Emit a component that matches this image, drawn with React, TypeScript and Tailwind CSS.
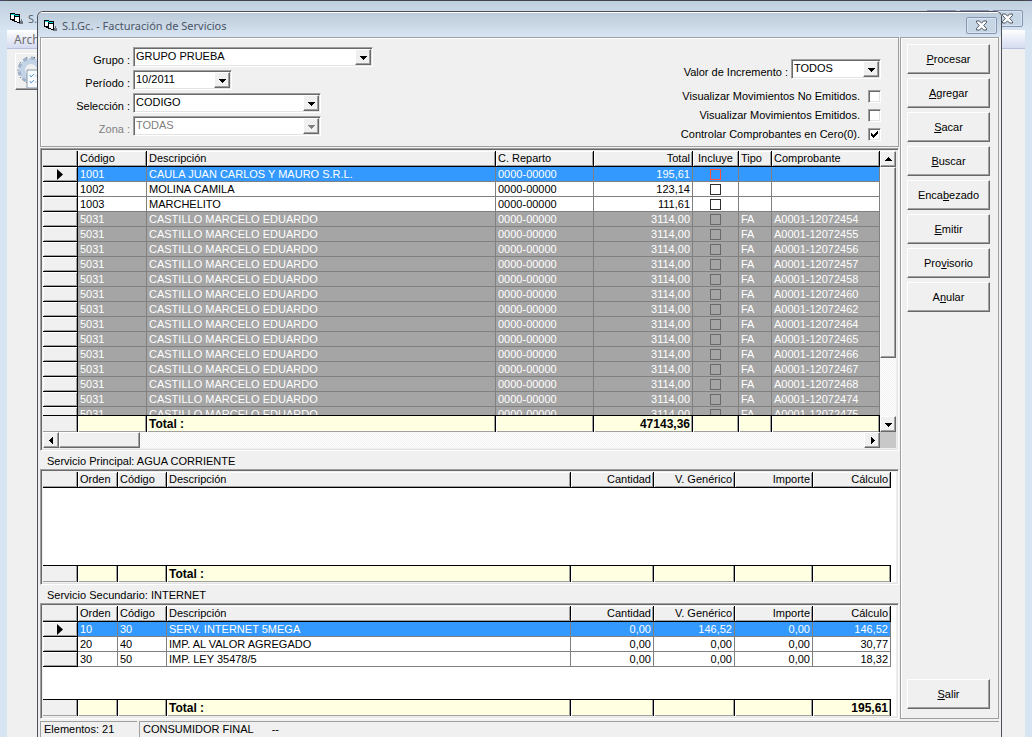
import type { ReactNode } from "react";

type Columna = {
    titulo: string;
    ancho?: string;
    derecha?: boolean;
    centro?: boolean;
};

type Fila = {
    celdas: string[];
    estado: "activa" | "normal" | "emitida";
};

const fuente = "font-['Liberation_Sans',Arial,sans-serif] text-[11px] leading-[13px]";

const columnasFacturas: Columna[] = [
    { titulo: "Código", ancho: "w-[69px]" },
    { titulo: "Descripción" },
    { titulo: "C. Reparto", ancho: "w-[98px]" },
    { titulo: "Total", ancho: "w-[99px]", derecha: true },
    { titulo: "Incluye", ancho: "w-[46px]", centro: true },
    { titulo: "Tipo", ancho: "w-[33px]" },
    { titulo: "Comprobante", ancho: "w-[108px]" },
];

const columnasServicio: Columna[] = [
    { titulo: "Orden", ancho: "w-[40px]" },
    { titulo: "Código", ancho: "w-[49px]" },
    { titulo: "Descripción" },
    { titulo: "Cantidad", ancho: "w-[83px]", derecha: true },
    { titulo: "V. Genérico", ancho: "w-[81px]", derecha: true },
    { titulo: "Importe", ancho: "w-[78px]", derecha: true },
    { titulo: "Cálculo", ancho: "w-[78px]", derecha: true },
];

const comprobantes = [
    "12072454", "12072455", "12072456", "12072457", "12072458", "12072460", "12072462",
    "12072464", "12072465", "12072466", "12072467", "12072468", "12072474", "12072475",
];

const facturas: Fila[] = [
    { celdas: ["1001", "CAULA JUAN CARLOS Y MAURO S.R.L.", "0000-00000", "195,61", "check", "", ""], estado: "activa" },
    { celdas: ["1002", "MOLINA CAMILA", "0000-00000", "123,14", "check", "", ""], estado: "normal" },
    { celdas: ["1003", "MARCHELITO", "0000-00000", "111,61", "check", "", ""], estado: "normal" },
    ...comprobantes.map((numero): Fila => ({
        celdas: ["5031", "CASTILLO MARCELO EDUARDO", "0000-00000", "3114,00", "check", "FA", `A0001-${numero}`],
        estado: "emitida",
    })),
];

const secundarios: Fila[] = [
    { celdas: ["10", "30", "SERV. INTERNET 5MEGA", "0,00", "146,52", "0,00", "146,52"], estado: "activa" },
    { celdas: ["20", "40", "IMP. AL VALOR AGREGADO", "0,00", "0,00", "0,00", "30,77"], estado: "normal" },
    { celdas: ["30", "50", "IMP. LEY 35478/5", "0,00", "0,00", "0,00", "18,32"], estado: "normal" },
];

const coloresFila = {
    activa: "bg-[#3399ff] text-white",
    normal: "bg-white text-black",
    emitida: "bg-[#a5a5a5] text-white",
};

const coloresCheck = {
    activa: "border-[#ff5040]",
    normal: "border-[#303030]",
    emitida: "border-[#696969]",
};

// [antes, tecla, despues]
const acciones = [
    ["", "P", "rocesar"],
    ["", "A", "gregar"],
    ["", "S", "acar"],
    ["", "B", "uscar"],
    ["Enca", "b", "ezado"],
    ["", "E", "mitir"],
    ["Pro", "v", "isorio"],
    ["A", "n", "ular"],
];

function IconoVB() {
    return (
        <svg width="14" height="13" viewBox="0 0 14 13" shapeRendering="crispEdges" aria-hidden="true">
            <path d="M8 9h3V7h1v2h1v3H9z" fill="#707a84" />
            <path d="M0 1h5v1h5v9H7v-1H4V9H2V8H0z" fill="#000" />
            <path d="M1 2h4v1h4v1H5V3H1z" fill="#00e0e0" />
            <path d="M1 3h3v4H1z" fill="#fff" />
            <path d="M5 5h4v5H7V9H5z" fill="#fff" />
        </svg>
    );
}

const botonTitulo = "flex h-[17px] w-[31px] items-center justify-center rounded-[2px] border border-[#8795b3] bg-[#c6d6e5] shadow-[inset_0_0_0_1px_#d8e4ef]";

function BotonCerrar() {
    return (
        <button aria-label="Cerrar" className={botonTitulo}>
            <svg width="13" height="11" viewBox="0 0 13 11" aria-hidden="true">
                <path d="M1.500 1h3l2 2.200L8.500 1h3v1.500L8.700 5.500l2.800 3V10h-3l-2-2.200L4.500 10h-3V8.500l2.800-3-2.800-3z" fill="#fff" stroke="#4d5664" strokeWidth="1" />
            </svg>
        </button>
    );
}

function Flecha({ direccion, color = "#000" }: { direccion: "arriba" | "abajo" | "izquierda" | "derecha"; color?: string }) {
    const formas = {
        arriba: "M4 2h1v1h1v1h1v1h1v1H1V5h1V4h1V3h1z",
        abajo: "M1 3h7v1H7v1H6v1H5v1H4V6H3V5H2V4H1z",
        izquierda: "M6 1v7H5V7H4V6H3V5H2V4h1V3h1V2h1V1z",
        derecha: "M3 1v7h1V7h1V6h1V5h1V4H6V3H5V2H4V1z",
    };
    return (
        <svg width="9" height="9" viewBox="0 0 9 9" shapeRendering="crispEdges" aria-hidden="true">
            <path d={formas[direccion]} fill={color} />
        </svg>
    );
}

const relieve = "border border-t-white border-l-white border-r-[#696969] border-b-[#696969] bg-[#f0f0f0] shadow-[inset_-1px_-1px_0_#a0a0a0]";
const hundido = "border border-t-[#a0a0a0] border-l-[#a0a0a0] border-r-white border-b-white shadow-[inset_1px_1px_0_#696969,inset_-1px_-1px_0_#e3e3e3]";

function Combo({ id, etiqueta, valor, ancho, deshabilitado }: { id: string; etiqueta: string; valor: string; ancho: string; deshabilitado?: boolean }) {
    return (
        <div className="flex items-center">
            <label htmlFor={id} className={`min-w-[92px] pt-[7px] pr-[3px] text-right whitespace-nowrap ${deshabilitado ? "text-[#808080]" : ""}`}>{etiqueta}</label>
            <div className={`relative h-[20px] ${ancho}`}>
                <select id={id} disabled={deshabilitado} className={`block h-full w-full appearance-none bg-white pr-5 pb-px pl-[2px] opacity-100 ${hundido} ${deshabilitado ? "text-[#808080]" : "text-black"}`}>
                    <option>{valor}</option>
                </select>
                <span className={`pointer-events-none absolute top-[2px] right-[2px] flex h-4 w-4 items-center justify-center ${relieve}`}>
                    <Flecha direccion="abajo" color={deshabilitado ? "#808080" : "#000"} />
                </span>
            </div>
        </div>
    );
}

function Opcion({ etiqueta, marcado }: { etiqueta: string; marcado?: boolean }) {
    return (
        <label className="flex h-[19px] items-center justify-end gap-2 whitespace-nowrap">
            {etiqueta}
            <span className="relative h-[13px] w-[13px]">
                <input type="checkbox" defaultChecked={marcado} className={`peer block h-full w-full appearance-none bg-white ${hundido}`} />
                <svg className="pointer-events-none absolute inset-0 hidden peer-checked:block" width="13" height="13" viewBox="0 0 13 13" shapeRendering="crispEdges" aria-hidden="true">
                    <path d="M3 5h1v1h1v1h1V6h1V5h1V4h1V3h1v3H9v1H8v1H7v1H6v1H5V9H4V8H3z" fill="#000" />
                </svg>
            </span>
        </label>
    );
}

function Columnas({ columnas }: { columnas: Columna[] }) {
    return (
        <colgroup>
            <col className="w-[35px]" />
            {columnas.map((c) => <col key={c.titulo} className={c.ancho} />)}
        </colgroup>
    );
}

function alinear(columna: Columna) {
    if (columna.derecha) return "text-right";
    return columna.centro ? "text-center" : "text-left";
}

function Grilla({ columnas, filas }: { columnas: Columna[]; filas: Fila[] }) {
    return (
        <table className="w-full table-fixed border-separate border-spacing-0">
            <Columnas columnas={columnas} />
            <thead>
                <tr className="h-4 bg-[#f0f0f0]">
                    <th aria-label="Selector" className="border-r border-b border-black p-0 shadow-[inset_-1px_-1px_0_#a0a0a0]"></th>
                    {columnas.map((c) => (
                        <th key={c.titulo} className={`overflow-hidden border-r border-b border-black px-0.5 py-0 font-normal whitespace-nowrap shadow-[inset_1px_1px_0_#fff,inset_-1px_-1px_0_#a0a0a0] ${alinear(c)}`}>{c.titulo}</th>
                    ))}
                </tr>
            </thead>
            <tbody>
                {filas.map((fila, i) => (
                    <tr key={i} className={`h-[15px] ${coloresFila[fila.estado]}`}>
                        <td className="border-r border-b border-black bg-[#f0f0f0] p-0 shadow-[inset_1px_1px_0_#fff,inset_-1px_-1px_0_#a0a0a0]">
                            {fila.estado === "activa" && (
                                <svg className="mx-auto block" width="6" height="11" viewBox="0 0 6 11" aria-hidden="true">
                                    <path d="M0 0l6 5.500L0 11z" fill="#000" />
                                </svg>
                            )}
                        </td>
                        {fila.celdas.map((celda, j) => (
                            <td key={j} className={`overflow-hidden border-r border-b border-[#808080] px-0.5 py-0 whitespace-nowrap ${alinear(columnas[j])}`}>
                                {celda === "check" ? (
                                    <input type="checkbox" aria-label={`Incluye ${fila.celdas[1]}`} className={`mx-auto block h-[11px] w-[11px] appearance-none border ${coloresCheck[fila.estado]}`} />
                                ) : celda}
                            </td>
                        ))}
                    </tr>
                ))}
            </tbody>
        </table>
    );
}

function Totales({ columnas, valores }: { columnas: Columna[]; valores: string[] }) {
    return (
        <table className="w-full table-fixed border-separate border-spacing-0">
            <Columnas columnas={columnas} />
            <tbody>
                <tr className="h-[17px] bg-[#ffffe1] text-[12px] font-bold">
                    <td className="border-t border-r border-black bg-[#f0f0f0] p-0 shadow-[inset_-1px_-1px_0_#a0a0a0]"></td>
                    {valores.map((valor, i) => (
                        <td key={i} className={`border-t border-r border-black px-0.5 py-0 whitespace-nowrap shadow-[inset_1px_0_0_#fff,inset_-1px_-1px_0_#a0a0a0] ${alinear(columnas[i])}`}>{valor}</td>
                    ))}
                </tr>
            </tbody>
        </table>
    );
}

function GrillaServicio({ titulo, filas, total }: { titulo: string; filas: Fila[]; total: string }) {
    return (
        <section>
            <h2 className="h-[18px] pt-1 pl-[7px]">{titulo}</h2>
            <div className={`p-0.5 ${hundido}`}>
                <div className="bg-white pr-[5px]">
                    <div className="h-[93px]">
                        <Grilla columnas={columnasServicio} filas={filas} />
                    </div>
                    <Totales columnas={columnasServicio} valores={["", "", "Total :", "", "", "", total]} />
                </div>
            </div>
        </section>
    );
}

function BotonAccion({ children }: { children: ReactNode }) {
    return (
        <button className={`h-[30px] w-full ${relieve}`}>{children}</button>
    );
}

const trama = "bg-[repeating-conic-gradient(#f0f0f0_0_25%,#fff_0_50%)] bg-[length:2px_2px]";

export default function App() {
    return (
        <div className={`relative min-h-screen overflow-hidden bg-[#4a4468] text-black ${fuente}`}>
            <div className="min-h-screen rounded-t-md border-t border-[#45434b] bg-[#d7e4f2] px-[7px]">
                <header className="-mx-[7px] flex h-[29px] items-start justify-between bg-linear-to-b from-[#c0cfde] to-[#d7e4f2] pt-[9px] pr-[9px] pl-[10px]">
                    <div className="flex items-center gap-1 pt-0.5 font-['Noto_Sans',sans-serif] text-[#5a6473]">
                        <IconoVB />
                        <span>S.I.Gc.</span>
                    </div>
                    <div className="flex gap-0.5">
                        <button aria-label="Minimizar" className={botonTitulo}></button>
                        <button aria-label="Maximizar" className={botonTitulo}></button>
                        <BotonCerrar />
                    </div>
                </header>
                <nav className="h-[19px] border-b border-[#b8c0dc] bg-linear-to-b from-white to-[#d5dbf0] pt-[3px] pl-[7px] font-['Noto_Sans',sans-serif] text-[12px] text-[#6d6d6d]">
                    <a href="#archivo">Archivo</a>
                </nav>
                <div className="min-h-[calc(100vh-49px)] bg-[#f0f0f0] pt-1 pl-2">
                    <button aria-label="Procesos" className={`h-[37px] w-[38px] ${relieve}`}>
                        <svg width="36" height="34" viewBox="0 0 36 34" aria-hidden="true">
                            <circle cx="15" cy="15" r="9" fill="none" stroke="#c3d3e6" strokeWidth="6" />
                            <circle cx="15" cy="15" r="12" fill="none" stroke="#9fb2c8" strokeWidth="3" strokeDasharray="4 4" />
                            <circle cx="15" cy="15" r="13" fill="none" stroke="#26384e" strokeWidth="1" strokeDasharray="1 7" />
                            <path d="M11 15h22v18H11z" fill="#f8fbff" stroke="#8b99a8" />
                            <path d="M14 20l1 2 3-3M14 26l1 2 3-3" fill="none" stroke="#5b9bd5" />
                            <path d="M19 21h9M19 27h9" stroke="#c0cede" />
                        </svg>
                    </button>
                </div>
            </div>

            <div className="absolute top-[11px] right-[30px] bottom-0 left-[37px] flex flex-col overflow-hidden rounded-t-md border border-b-0 border-[#4b4f57] bg-[#f0f0f0] px-0.5">
                <header className="-mx-0.5 flex h-[25px] shrink-0 items-center justify-between border-t border-white bg-linear-to-b from-[#bccbd9] to-[#d8e5f3] pr-1 pl-[6px]">
                    <div className="flex items-center gap-1 font-['Noto_Sans',sans-serif] text-[#4c5566]">
                        <IconoVB />
                        <h1>S.I.Gc. - Facturación de Servicios</h1>
                    </div>
                    <BotonCerrar />
                </header>

                <div className="flex shrink-0">
                    <main className="min-w-0 flex-1">
                        <section className="flex h-[110px] justify-between border border-[#a0a0a0] pt-[9px] pr-[17px] shadow-[inset_1px_1px_0_#fff]">
                            <div className="flex flex-col gap-[3px]">
                                <Combo id="grupo" etiqueta="Grupo :" valor="GRUPO PRUEBA" ancho="w-[240px]" />
                                <Combo id="periodo" etiqueta="Período :" valor="10/2011" ancho="w-[99px]" />
                                <Combo id="seleccion" etiqueta="Selección :" valor="CODIGO" ancho="w-[188px]" />
                                <Combo id="zona" etiqueta="Zona :" valor="TODAS" ancho="w-[188px]" deshabilitado />
                            </div>
                            <div className="flex flex-col items-end pt-3">
                                <Combo id="incremento" etiqueta="Valor de Incremento :" valor="TODOS" ancho="w-[90px]" />
                                <div className="flex flex-col pt-2">
                                    <Opcion etiqueta="Visualizar Movimientos No Emitidos." />
                                    <Opcion etiqueta="Visualizar Movimientos Emitidos." />
                                    <Opcion etiqueta="Controlar Comprobantes en Cero(0)." marcado />
                                </div>
                            </div>
                        </section>

                        <section className={`mt-px p-0.5 ${hundido}`}>
                            <div className="flex">
                                <div className="min-w-0 flex-1">
                                    <div className="h-[264px] overflow-hidden">
                                        <Grilla columnas={columnasFacturas} filas={facturas} />
                                    </div>
                                    <Totales columnas={columnasFacturas} valores={["", "Total :", "", "47143,36", "", "", ""]} />
                                </div>
                                <div className={`flex w-4 flex-col ${trama}`}>
                                    <button aria-label="Subir" className={`flex h-4 items-center justify-center ${relieve}`}><Flecha direccion="arriba" /></button>
                                    <div className={`h-[191px] ${relieve}`}></div>
                                    <button aria-label="Bajar" className={`mt-auto flex h-4 items-center justify-center ${relieve}`}><Flecha direccion="abajo" /></button>
                                </div>
                            </div>
                            <div className="flex h-4 bg-[#c8c8c8]">
                                <div className={`flex flex-1 ${trama}`}>
                                    <button aria-label="Izquierda" className={`flex w-4 items-center justify-center ${relieve}`}><Flecha direccion="izquierda" /></button>
                                    <div className={`w-[81px] ${relieve}`}></div>
                                    <button aria-label="Derecha" className={`ml-auto flex w-4 items-center justify-center ${relieve}`}><Flecha direccion="derecha" /></button>
                                </div>
                                <div className="w-4"></div>
                            </div>
                        </section>

                        <GrillaServicio titulo="Servicio Principal: AGUA CORRIENTE" filas={[]} total="" />
                        <GrillaServicio titulo="Servicio Secundario: INTERNET" filas={secundarios} total="195,61" />
                    </main>

                    <aside className="ml-px flex w-[99px] flex-col gap-1 border border-[#a0a0a0] pt-[6px] pr-2 pb-[9px] pl-[6px] shadow-[inset_1px_1px_0_#fff]">
                        {acciones.map(([antes, tecla, despues]) => (
                            <BotonAccion key={antes + tecla + despues}>{antes}<u>{tecla}</u>{despues}</BotonAccion>
                        ))}
                        <div className="mt-auto">
                            <BotonAccion><u>S</u>alir</BotonAccion>
                        </div>
                    </aside>
                </div>

                <footer className="mt-0.5 flex flex-1 gap-0.5 whitespace-pre">
                    <div className="w-[97px] border-t border-l border-[#a0a0a0] pt-px pl-[3px]">Elementos: 21</div>
                    <div className="flex flex-1 gap-[18px] border-t border-l border-[#a0a0a0] pt-px pl-[3px]">
                        <span>CONSUMIDOR FINAL</span>
                        <span>--</span>
                    </div>
                </footer>
            </div>
        </div>
    );
}
